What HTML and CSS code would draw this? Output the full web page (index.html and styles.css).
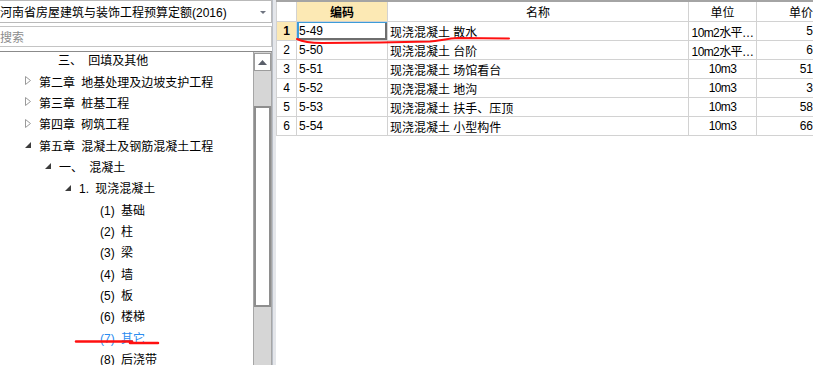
FILE: index.html
```html
<!DOCTYPE html>
<html lang="zh-CN">
<head>
    <meta charset="UTF-8">
    <title>定额查询</title>
    <link rel="stylesheet" href="styles.css">
</head>
<body>
    <div class="side">
        <div class="combo">
            <span class="combo-text">河南省房屋建筑与装饰工程预算定额(2016)</span>
            <span class="combo-arrow"></span>
        </div>
        <div class="search">搜索</div>
        <div class="tree">
            <div class="tree-list">
                <div class="node lv2"><span class="tog"></span>三、 回填及其他</div>
                <div class="node lv1"><span class="tog closed"><svg width="6" height="9" viewBox="0 0 6 9"><polygon points="0.5,0.5 5.5,4.5 0.5,8.5" fill="none" stroke="#9a9a9a" stroke-width="1"/></svg></span>第二章 地基处理及边坡支护工程</div>
                <div class="node lv1"><span class="tog closed"><svg width="6" height="9" viewBox="0 0 6 9"><polygon points="0.5,0.5 5.5,4.5 0.5,8.5" fill="none" stroke="#9a9a9a" stroke-width="1"/></svg></span>第三章 桩基工程</div>
                <div class="node lv1"><span class="tog closed"><svg width="6" height="9" viewBox="0 0 6 9"><polygon points="0.5,0.5 5.5,4.5 0.5,8.5" fill="none" stroke="#9a9a9a" stroke-width="1"/></svg></span>第四章 砌筑工程</div>
                <div class="node lv1"><span class="tog"><svg width="6" height="6" viewBox="0 0 6 6"><polygon points="6,0 6,6 0,6" fill="#3c3c3c"/></svg></span>第五章 混凝土及钢筋混凝土工程</div>
                <div class="node lv2"><span class="tog"><svg width="6" height="6" viewBox="0 0 6 6"><polygon points="6,0 6,6 0,6" fill="#3c3c3c"/></svg></span>一、 混凝土</div>
                <div class="node lv3"><span class="tog"><svg width="6" height="6" viewBox="0 0 6 6"><polygon points="6,0 6,6 0,6" fill="#3c3c3c"/></svg></span>1. 现浇混凝土</div>
                <div class="node lv4">(1) 基础</div>
                <div class="node lv4">(2) 柱</div>
                <div class="node lv4">(3) 梁</div>
                <div class="node lv4">(4) 墙</div>
                <div class="node lv4">(5) 板</div>
                <div class="node lv4">(6) 楼梯</div>
                <div class="node lv4 active">(7) 其它</div>
                <div class="node lv4">(8) 后浇带</div>
            </div>
            <div class="vscroll">
                <div class="sb-up"><svg width="9" height="5" viewBox="0 0 9 5"><polygon points="4.5,0 9,5 0,5" fill="#5a5f6a"/></svg></div>
                <div class="sb-track top"></div>
                <div class="sb-thumb"></div>
                <div class="sb-track"></div>
            </div>
        </div>
    </div>

    <div class="divider"></div>

    <div class="grid-wrap">
        <table class="grid">
            <colgroup>
                <col class="c-rn">
                <col class="c-code">
                <col class="c-name">
                <col class="c-unit">
                <col class="c-price">
            </colgroup>
            <thead>
                <tr>
                    <th></th>
                    <th class="sel-head">编码</th>
                    <th>名称</th>
                    <th>单位</th>
                    <th class="num">单价</th>
                </tr>
            </thead>
            <tbody>
                <tr class="cur">
                    <td class="rn">1</td>
                    <td class="focus">5-49</td>
                    <td>现浇混凝土 散水</td>
                    <td class="unit">10m2水平…</td>
                    <td class="num">5</td>
                </tr>
                <tr>
                    <td class="rn">2</td>
                    <td>5-50</td>
                    <td>现浇混凝土 台阶</td>
                    <td class="unit">10m2水平…</td>
                    <td class="num">6</td>
                </tr>
                <tr>
                    <td class="rn">3</td>
                    <td>5-51</td>
                    <td>现浇混凝土 场馆看台</td>
                    <td class="unit">10m3</td>
                    <td class="num">51</td>
                </tr>
                <tr>
                    <td class="rn">4</td>
                    <td>5-52</td>
                    <td>现浇混凝土 地沟</td>
                    <td class="unit">10m3</td>
                    <td class="num">3</td>
                </tr>
                <tr>
                    <td class="rn">5</td>
                    <td>5-53</td>
                    <td>现浇混凝土 扶手、压顶</td>
                    <td class="unit">10m3</td>
                    <td class="num">58</td>
                </tr>
                <tr>
                    <td class="rn">6</td>
                    <td>5-54</td>
                    <td>现浇混凝土 小型构件</td>
                    <td class="unit">10m3</td>
                    <td class="num">66</td>
                </tr>
            </tbody>
        </table>
    </div>

    <!-- red pen marks drawn over the screenshot -->
    <svg class="marks" width="813" height="365" viewBox="0 0 813 365">
        <path d="M297 39 C303 42 310 43 322 43 L380 42.5 L430 41.5 C440 40.5 448 38.5 458 38 L509 38.5" fill="none" stroke="#ff1010" stroke-width="2" stroke-linecap="round"/>
        <path d="M76 341.5 L132 341.5" fill="none" stroke="#ff1010" stroke-width="2.5" stroke-linecap="round"/>
        <path d="M130 343 L158 343" fill="none" stroke="#ff1010" stroke-width="2.5" stroke-linecap="round"/>
    </svg>
</body>
</html>
```

FILE: styles.css
```css
body {
    margin: 0;
    height: 365px;
    display: flex;
    overflow: hidden;
    background: #fff;
    color: #000;
    font-family: "Liberation Sans", "Noto Sans CJK SC", sans-serif;
    font-size: 12px;
    position: relative;
}

/* left: quota book + chapter tree */
.side {
    width: 272px;
    flex-shrink: 0;
    display: flex;
    flex-direction: column;
}
.combo {
    height: 21px;
    border: 1px solid #b9b9b9;
    border-left: 0;
    display: flex;
    align-items: center;
    justify-content: space-between;
    padding-right: 5px;
    white-space: nowrap;
}
.combo-text {
    word-spacing: 2px;
}
.combo-arrow {
    width: 0;
    height: 0;
    border-left: 3px solid transparent;
    border-right: 3px solid transparent;
    border-top: 3px solid #6f7480;
    margin-top: 1px;
}
.search {
    margin-top: 3px;
    height: 19px;
    border: 1px solid #c4c4c4;
    border-left: 0;
    display: flex;
    align-items: center;
    color: #8c8c8c;
}
.tree {
    margin-top: 4px;
    flex: 1;
    border-top: 1px solid #8b8b8b;
    display: flex;
    overflow: hidden;
}
.tree-list {
    flex: 1;
    margin-top: -3px;
    white-space: nowrap;
    overflow: hidden;
    word-spacing: 3px;
}
.node {
    height: 21.36px;
    display: flex;
    align-items: center;
}
.tog {
    width: 14px;
    flex-shrink: 0;
    display: flex;
    align-items: center;
}
.tog.closed {
    margin-top: -1px;
}
.lv1 { padding-left: 25px; }
.lv2 { padding-left: 45px; }
.lv3 { padding-left: 65px; }
.lv4 { padding-left: 100px; }
.lv2 .tog:empty { width: 13px; }
.node.active {
    color: #2a8cf0;
}

.vscroll {
    width: 17px;
    flex-shrink: 0;
    border-left: 1px solid #a6a6a6;
    border-right: 1px solid #a6a6a6;
    display: flex;
    flex-direction: column;
    background: #d6d6d6;
}
.sb-up {
    height: 16px;
    margin-top: 1px;
    background: #fff;
    border: 1px solid #9c9c9c;
    display: flex;
    align-items: center;
    justify-content: center;
}
.sb-track.top {
    height: 35px;
}
.sb-thumb {
    height: 197px;
    background: #fff;
    border: 2px solid #8e8e8e;
}

.divider {
    width: 3px;
    flex-shrink: 0;
    background: #e4e6ea;
    border-left: 1px solid #b9bec6;
}

/* right: quota item grid */
.grid-wrap {
    flex: 1;
    overflow: hidden;
    border-top: 2px solid #a4a4a4;
}
.grid {
    border-collapse: collapse;
    table-layout: fixed;
    width: 538px;
    margin-top: -1px;
}
.c-rn { width: 20px; }
.c-code { width: 91px; }
.c-name { width: 301px; }
.c-unit { width: 68px; }
.c-price { width: 58px; }

.grid th,
.grid td {
    border: 1px solid #d2d2d2;
    padding: 0 2px;
    white-space: nowrap;
    overflow: hidden;
    text-overflow: clip;
    text-align: left;
}
.grid th {
    height: 19px;
    font-weight: normal;
    text-align: center;
}
.grid th.sel-head {
    background: #fce9b4;
    font-weight: bold;
}
.grid td {
    height: 18px;
}
.grid .num {
    text-align: right;
    padding-right: 1px;
}
.grid td.rn {
    text-align: center;
    padding: 0;
}
.grid tr.cur td.rn {
    background: #fce9b4;
    font-weight: bold;
}
.grid td.unit {
    text-align: center;
    padding: 0;
    letter-spacing: -0.6px;
}
.grid td.focus {
    box-shadow: inset 2px 1px 0 #3c9cd9, inset -2px -2px 0 #6e6e6e;
}

.marks {
    position: absolute;
    left: 0;
    top: 0;
    pointer-events: none;
}
```
